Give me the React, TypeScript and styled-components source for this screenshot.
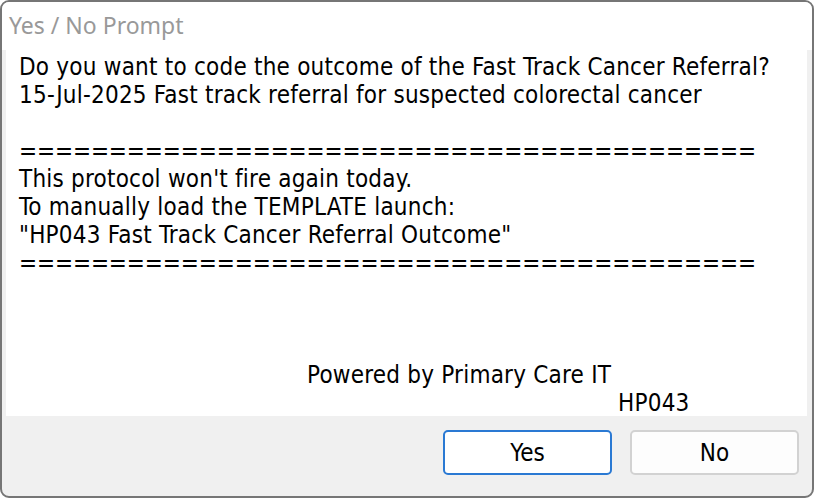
import React from 'react'
import styled, { createGlobalStyle } from 'styled-components'

const GlobalStyle = createGlobalStyle`
  html, body {
    margin: 0;
    padding: 0;
    background: #ffffff;
  }
  * {
    box-sizing: border-box;
  }
`

const Window = styled.div`
  width: 814px;
  height: 498px;
  border: 2px solid #767676;
  border-radius: 9px;
  background: #f0f0f0;
  overflow: hidden;
  display: flex;
  flex-direction: column;
`

const TitleBar = styled.div`
  height: 48px;
  flex: none;
  background: #ffffff;
  display: flex;
  align-items: center;
  padding: 0 0 2px 7px;
`

const Title = styled.span`
  font-family: 'Noto Sans', 'Open Sans', sans-serif;
  font-size: 23px;
  color: #999999;
`

const Body = styled.div`
  height: 366px;
  flex: none;
  padding: 0 5px 0 4px;
`

const Panel = styled.div`
  height: 100%;
  background: #ffffff;
  padding: 3px 0 0 13px;
  font-family: 'DejaVu Sans Condensed', 'DejaVu Sans', sans-serif;
  font-size: 24px;
  line-height: 28px;
  color: #000000;
`

const Line = styled.div<{ $indent?: number; $rule?: boolean }>`
  height: 28px;
  white-space: pre;
  letter-spacing: ${(p) => (p.$rule ? '-0.12px' : '0.22px')};
  padding-left: ${(p) => p.$indent ?? 0}px;
`

const ButtonBar = styled.div`
  flex: 1;
  display: flex;
  justify-content: flex-end;
  align-items: flex-start;
  gap: 18px;
  padding: 14px 13px 0 0;
`

const Button = styled.button<{ $primary?: boolean }>`
  width: 169px;
  height: 45px;
  border-radius: 5px;
  border: 2px solid ${(p) => (p.$primary ? '#2a79d3' : '#d2d2d2')};
  background: ${(p) => (p.$primary ? '#ffffff' : '#fdfdfd')};
  font-family: 'DejaVu Sans Condensed', 'DejaVu Sans', sans-serif;
  font-size: 24px;
  color: #000000;
  padding: 0;
  cursor: pointer;
`

const RULE = '='.repeat(41)

const lines: { text: string; indent?: number; rule?: boolean }[] = [
  { text: 'Do you want to code the outcome of the Fast Track Cancer Referral?' },
  { text: '15-Jul-2025 Fast track referral for suspected colorectal cancer' },
  { text: '' },
  { text: RULE, rule: true },
  { text: "This protocol won't fire again today." },
  { text: 'To manually load the TEMPLATE launch:' },
  { text: '"HP043 Fast Track Cancer Referral Outcome"' },
  { text: RULE, rule: true },
  { text: '' },
  { text: '' },
  { text: '' },
  { text: 'Powered by Primary Care IT', indent: 288 },
  { text: 'HP043', indent: 599 },
]

export default function App() {
  return (
    <>
      <GlobalStyle />
      <Window>
        <TitleBar>
          <Title>Yes / No Prompt</Title>
        </TitleBar>
        <Body>
          <Panel>
            {lines.map((l, i) => (
              <Line key={i} $indent={l.indent} $rule={l.rule}>
                {l.text}
              </Line>
            ))}
          </Panel>
        </Body>
        <ButtonBar>
          <Button $primary>Yes</Button>
          <Button>No</Button>
        </ButtonBar>
      </Window>
    </>
  )
}
